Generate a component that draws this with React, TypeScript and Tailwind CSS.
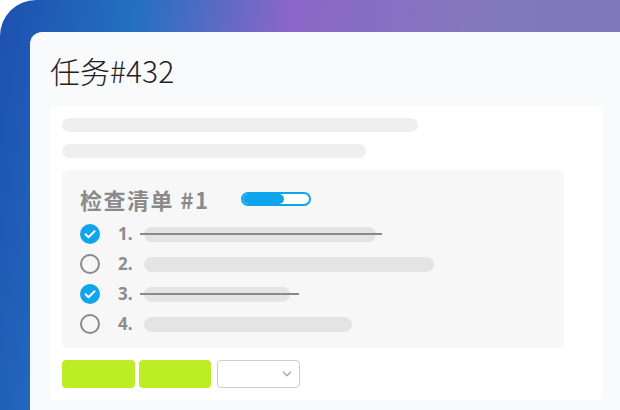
import { ChevronDown } from "lucide-react"

const items = [
  { n: "1.", w: 232, done: true, line: 242 },
  { n: "2.", w: 290, done: false, line: 0 },
  { n: "3.", w: 146, done: true, line: 159 },
  { n: "4.", w: 208, done: false, line: 0 },
]

const CheckIcon = ({ done }: { done: boolean }) =>
  done ? (
    <div className="w-5 h-5 rounded-full bg-[#0ea5ec] flex items-center justify-center">
      <svg viewBox="0 0 20 20" className="w-5 h-5" fill="none">
        <path d="M5.5 10.2l3 3 6-6" stroke="#fff" strokeWidth="2" strokeLinecap="round" strokeLinejoin="round" />
      </svg>
    </div>
  ) : (
    <div className="w-5 h-5 rounded-full border-2 border-[#8a8a8a]"></div>
  )

export default function App() {
  return (
    <div className="w-[620px] h-[410px] bg-white overflow-hidden font-['Noto_Sans','Noto_Sans_CJK_SC',sans-serif]">
      <div className="h-full rounded-tl-[36px] pl-[30px] pt-[32px] bg-[linear-gradient(100deg,#1d50b0_0%,#2470c0_20%,#8a66c8_42%,#8479bd_70%,#7b76b8_100%)]">
        <div className="h-full bg-[#f8fafc] rounded-tl-[12px] pl-5 pr-[17px] pt-5">
          <h1 className="text-[30px] leading-9 text-[#1f1f1f] font-light font-['Noto_Sans_CJK_SC',sans-serif]">任务#432</h1>
          <div className="mt-[18px] bg-white rounded-md p-3">
            <div className="h-[14px] w-[356px] rounded-full bg-[#efefef]"></div>
            <div className="mt-3 h-[14px] w-[304px] rounded-full bg-[#efefef]"></div>
            <div className="mt-3 w-[502px] h-[178px] bg-[#f7f7f7] rounded-md pl-[18px] pt-[15px]">
              <div className="h-7 flex items-center">
                <span className="text-[22px] font-bold tracking-[1.5px] text-[#8a8a8a] font-['Noto_Sans_CJK_SC',sans-serif]">检查清单 #1</span>
                <div className="ml-8 w-[70px] h-[14px] rounded-full border-2 border-[#0ea5ec] bg-white overflow-hidden">
                  <div className="h-full w-[41px] bg-[#0ea5ec] rounded-full"></div>
                </div>
              </div>
              <div className="mt-[6px]">
                {items.map((it) => (
                  <div key={it.n} className="h-[30px] flex items-center">
                    <CheckIcon done={it.done} />
                    <span className="ml-[18px] w-[26px] text-[17px] font-bold text-[#8c8c8c] font-['Noto_Sans',sans-serif]">{it.n}</span>
                    <div className="relative">
                      <div className="h-[15px] rounded-full bg-[#e4e4e4]" style={{ width: it.w }}></div>
                      {it.done && (
                        <div className="absolute left-[-4px] top-[6px] h-[2px] bg-[#8a8a8a]" style={{ width: it.line }}></div>
                      )}
                    </div>
                  </div>
                ))}
              </div>
            </div>
            <div className="mt-3 flex items-center">
              <div className="w-[73px] h-[28px] rounded bg-[#bdee25]"></div>
              <div className="ml-1 w-[72px] h-[28px] rounded bg-[#bdee25]"></div>
              <div className="ml-[6px] w-[83px] h-[28px] rounded border border-[#cccccc] bg-white flex items-center justify-end pr-[5px]">
                <ChevronDown className="w-[14px] h-[14px] text-[#aaaaaa]" strokeWidth={2.5} />
              </div>
            </div>
          </div>
        </div>
      </div>
    </div>
  )
}
